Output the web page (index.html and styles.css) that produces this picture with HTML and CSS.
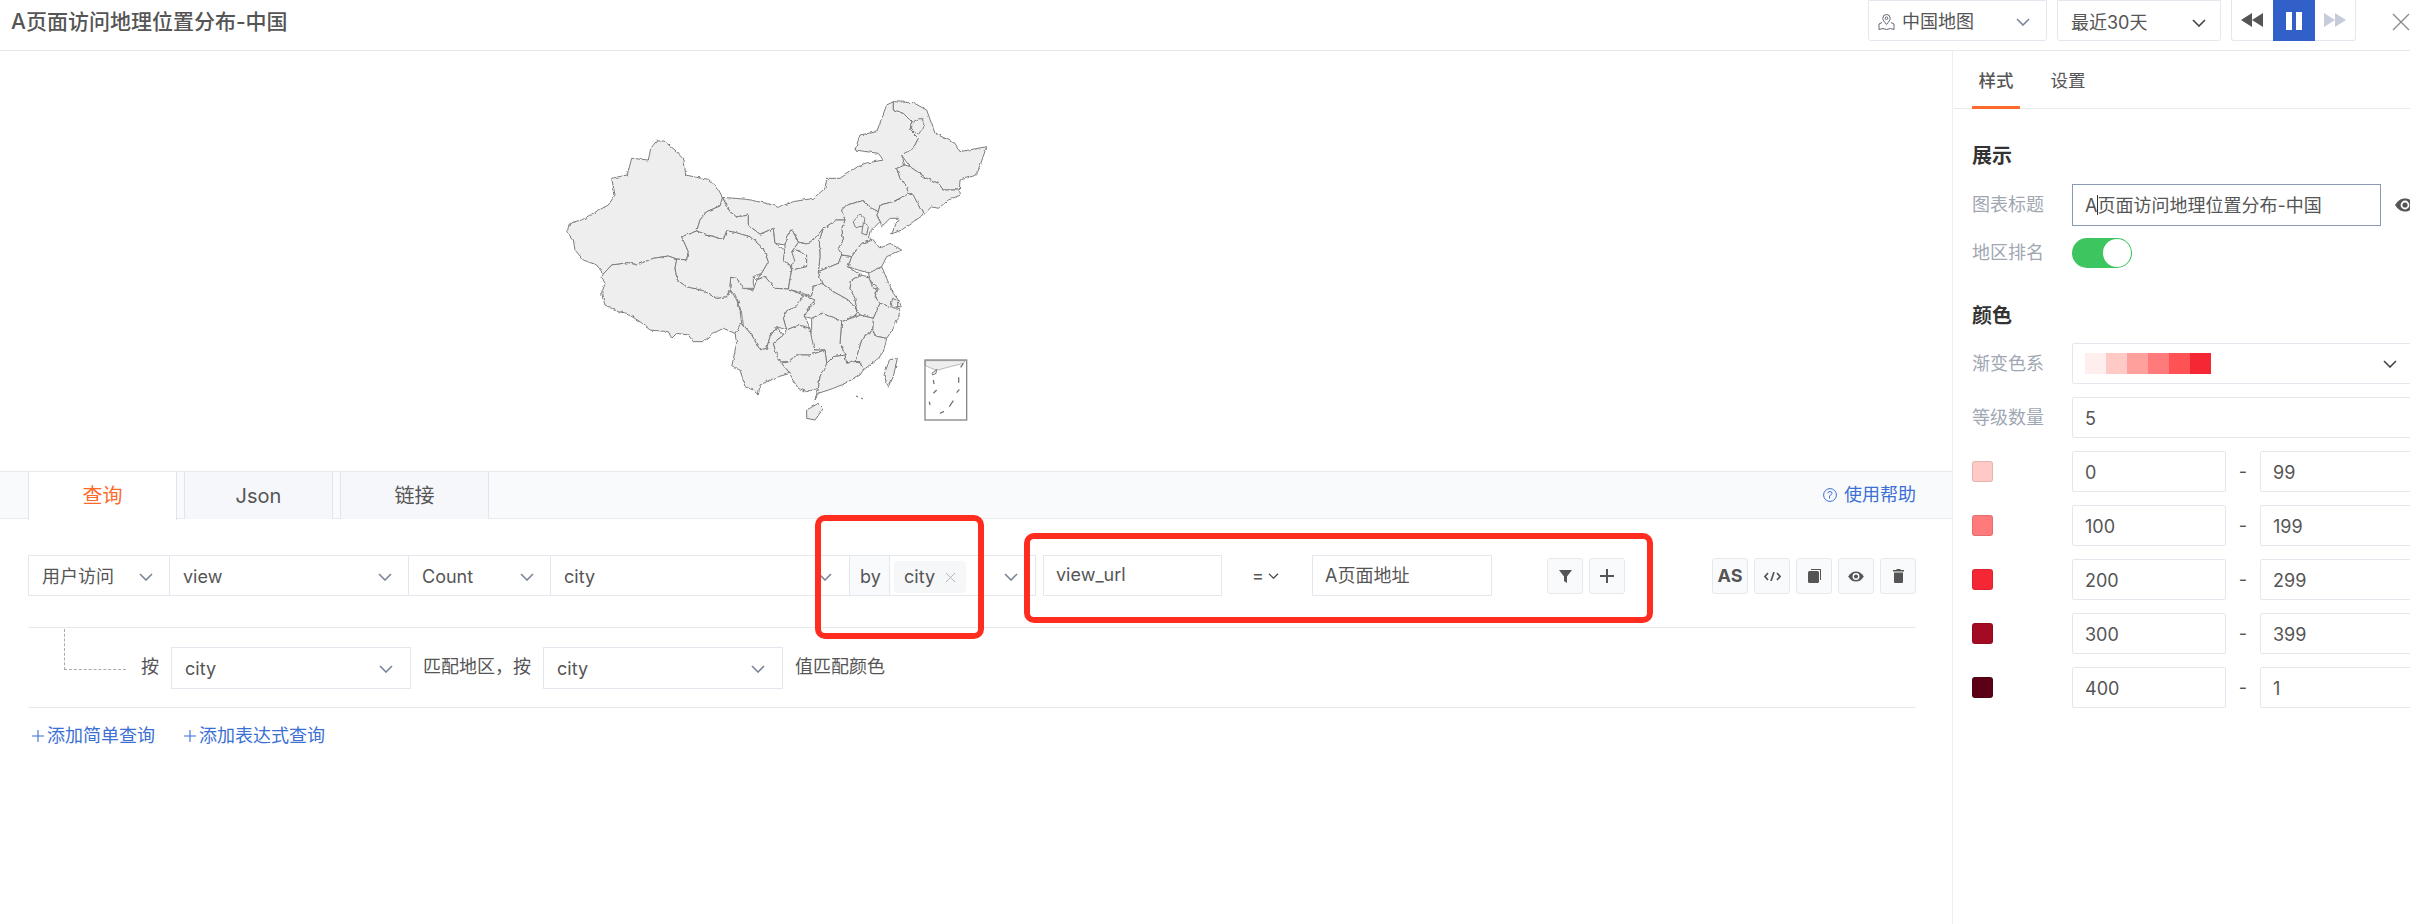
FILE: index.html
```html
<!DOCTYPE html>
<html>
<head>
	<meta charset="utf-8">
	<title>A页面访问地理位置分布-中国</title>
	<link rel="stylesheet" href="styles.css">
</head>
<body>
<svg class="defs" width="0" height="0">
	<symbol id="chev" viewBox="0 0 14 8"><path d="M1 1l6 6 6-6" fill="none" stroke="currentColor" stroke-width="1.6"/></symbol>
	<symbol id="eye" viewBox="0 0 20 14"><path d="M0 7C3 2.500 6 .5 10 .5S17 2.500 20 7c-3 4.500-6 6.500-10 6.500S3 11.500 0 7z" fill="#555"/><circle cx="10" cy="7" r="4.400" fill="#fff"/><circle cx="10" cy="7" r="2.600" fill="#555"/></symbol>
	<symbol id="plus" viewBox="0 0 12 12"><path d="M6 0v12M0 6h12" stroke="#3b6fd4" stroke-width="1.100"/></symbol>
	<filter id="rough" x="-5%" y="-5%" width="110%" height="110%" primitiveUnits="userSpaceOnUse">
		<feTurbulence type="fractalNoise" baseFrequency="0.07" numOctaves="2" seed="4" result="noise"/>
		<feDisplacementMap in="SourceGraphic" in2="noise" scale="9" xChannelSelector="R" yChannelSelector="G" result="moved"/>
		<feGaussianBlur in="moved" stdDeviation="0.8"/>
	</filter>
</svg>

<div class="header">
	<div class="title">A页面访问地理位置分布-中国</div>
	<div class="sel top-sel map-sel">
		<span class="sel-text">
			<svg class="pin" viewBox="0 0 17 16"><path d="M8.500 10.500C6.500 8 4.800 6.200 4.800 4.200a3.700 3.700 0 0 1 7.400 0c0 2-1.700 3.800-3.700 6.300z" fill="none" stroke="#667" stroke-width="1"/><circle cx="8.500" cy="4.200" r="1.300" fill="none" stroke="#667"/><path d="M4 8.500L1 10v5.500l4-1 3.500 1 4-1 3.500 1V10l-3-1.500" fill="none" stroke="#667"/></svg>
			中国地图
		</span>
		<svg class="chev"><use href="#chev"/></svg>
	</div>
	<div class="sel top-sel date-sel">
		<span>最近30天</span>
		<svg class="chev dark"><use href="#chev"/></svg>
	</div>
	<div class="player">
		<div class="play-btn"><svg width="22" height="14" viewBox="0 0 22 14"><path d="M11 0v14L0 7zM22 0v14L11 7z" fill="#555"/></svg></div>
		<div class="play-btn on"><svg width="16" height="18" viewBox="0 0 16 18"><path d="M0 0h6v18H0zM10 0h6v18h-6z" fill="#fff"/></svg></div>
		<div class="play-btn"><svg width="22" height="14" viewBox="0 0 22 14"><path d="M0 0v14l11-7zM11 0v14l11-7z" fill="#c6ccd9"/></svg></div>
	</div>
	<svg class="close" width="18" height="18" viewBox="0 0 18 18"><path d="M1 1l16 16M17 1L1 17" stroke="#888" stroke-width="1.300"/></svg>
</div>

<div class="main">
	<div class="left">
		<div class="map-area">
			<svg class="china" width="480" height="360" viewBox="0 0 1440 1080">
				<g filter="url(#rough)">
				<polygon points="548,352 530,320 505,298 470,292 437,285 432,240 405,210 372,183 350,183 332,205 325,240 275,235 262,285 215,295 225,345 205,375 150,405 125,420 90,430 80,455 100,480 105,510 130,540 170,555 190,582 215,555 265,548 290,555 340,535 385,528 410,537 440,540 445,515 425,470 470,453 480,420 500,395 540,378"/>
				<polygon points="190,582 215,555 265,548 290,555 340,535 385,528 410,537 405,565 412,600 440,620 490,632 530,655 560,650 572,630 590,660 600,690 605,730 595,745 585,760 550,745 520,760 490,785 460,785 445,765 410,760 395,775 385,755 330,750 300,725 260,700 235,695 195,675 185,640 195,610 185,590"/>
				<polygon points="470,453 505,465 550,478 560,452 590,458 630,470 670,505 685,545 665,580 640,590 640,625 610,625 590,595 572,592 570,625 560,650 530,655 490,632 440,620 412,600 405,565 410,537 440,540 445,515 425,470"/>
				<polygon points="548,352 570,395 590,410 625,405 625,435 660,462 700,445 705,490 735,510 730,540 750,558 755,570 800,560 800,525 770,510 755,515 755,570 745,627 705,625 675,590 645,598 665,580 685,545 670,505 630,470 590,458 560,452 550,478 505,465 470,453 480,420 500,395 540,378"/>
				<polygon points="548,352 620,358 680,370 715,382 760,365 820,355 855,325 860,295 900,295 945,265 975,250 1030,240 1015,220 945,210 960,165 1010,155 1040,75 1060,65 1060,90 1090,100 1115,125 1110,150 1135,175 1120,205 1085,225 1095,255 1070,265 1080,295 1100,320 1105,342 1060,365 1020,375 1015,395 995,385 970,362 920,375 905,390 915,420 890,420 850,445 820,480 800,492 775,485 755,447 740,470 735,495 705,490 700,445 660,462 625,435 625,405 590,410 570,395"/>
				<polygon points="1060,65 1120,68 1160,90 1185,160 1245,190 1260,215 1340,200 1310,285 1260,300 1258,330 1210,330 1195,310 1160,295 1110,260 1095,240 1085,225 1120,205 1135,175 1110,150 1115,125 1090,100 1060,90"/>
				<polygon points="1115,125 1145,115 1152,135 1135,165 1115,150"/>
				<polygon points="1095,255 1110,260 1160,295 1195,310 1210,330 1258,330 1262,345 1225,360 1195,385 1175,380 1150,405 1135,375 1115,340 1105,342 1100,320 1080,295 1070,265"/>
				<polygon points="1105,342 1120,345 1135,375 1150,405 1120,425 1085,450 1055,462 1075,415 1050,415 1025,440 1020,420 1010,405 1015,395 1020,375 1060,365"/>
				<polygon points="905,390 920,375 970,362 995,385 1015,395 1010,405 1020,425 990,455 985,475 1000,480 965,490 935,530 905,525 895,505 910,480 905,445 915,420"/>
				<polygon points="940,425 960,402 975,415 970,440 945,440"/>
				<polygon points="970,430 985,440 980,465 965,460"/>
				<polygon points="850,445 890,420 915,420 905,445 910,480 895,505 905,525 895,550 835,575 840,530 838,480"/>
				<polygon points="850,445 838,480 840,530 835,575 845,610 820,620 815,650 790,640 745,627 755,570 800,560 800,525 770,510 755,515 775,487 800,492 820,480"/>
				<polygon points="735,495 740,470 755,447 775,487 755,515 765,545 750,558 730,540 735,510"/>
				<polygon points="835,575 895,550 905,525 935,530 925,560 960,585 935,600 930,625 945,655 950,690 925,660 880,635 845,610"/>
				<polygon points="935,530 965,490 1000,480 1020,505 1050,490 1085,510 1040,530 1025,560 995,580 960,572 925,560"/>
				<polygon points="985,580 1025,560 1040,595 1060,640 1075,660 1085,680 1050,680 1020,670 1005,650 1015,625 995,610"/>
				<polygon points="935,600 960,585 985,590 1000,625 1012,625 1005,650 1020,670 1000,715 960,705 950,690 945,655 930,625"/>
				<polygon points="1020,670 1050,680 1080,690 1075,715 1060,745 1040,775 1005,768 998,745 1000,715"/>
				<polygon points="1058,655 1072,662 1074,682 1052,680"/>
				<polygon points="1005,768 1040,775 1030,815 1015,835 970,870 960,845 945,845 965,780 998,750"/>
				<polygon points="905,725 960,705 1000,715 998,745 965,780 945,845 920,850 915,825 900,790"/>
				<polygon points="790,645 815,650 820,620 845,610 880,635 925,660 950,690 950,705 905,725 880,712 845,700 815,715 795,710 800,690 825,670"/>
				<polygon points="815,715 845,700 880,712 905,725 900,790 915,825 880,830 860,850 855,810 825,810 810,775 815,745"/>
				<polygon points="790,645 825,660 800,690 795,710 810,745 775,735 740,750 730,715 740,692 770,680"/>
				<polygon points="572,592 590,595 610,625 640,630 650,600 675,590 705,625 745,627 790,645 770,680 740,692 730,715 740,750 710,740 690,770 680,805 660,810 635,765 610,735 605,700 590,650 570,625"/>
				<polygon points="600,730 610,735 635,765 660,810 680,805 690,770 710,740 730,765 700,790 715,840 725,850 750,880 715,890 690,900 660,915 655,945 640,930 615,920 600,870 575,860 590,790 585,760 595,745"/>
				<polygon points="740,750 775,735 810,745 815,775 825,810 855,810 810,825 770,825 745,845 725,845 715,840 700,790 730,765"/>
				<polygon points="725,850 745,845 770,825 810,825 855,810 860,850 870,840 840,890 835,925 800,935 775,925 755,895 750,880"/>
				<polygon points="860,850 880,830 915,825 920,850 945,845 960,845 970,870 960,885 915,910 880,925 835,940 825,960 835,925 840,890"/>
				<polygon points="800,990 835,970 850,985 825,1020 800,1015"/>
				<polygon points="1050,835 1072,835 1060,890 1045,922 1032,885"/>
				</g>
				<path class="inset-land" d="M1155 842h120l-5 8c-30 8-50 12-75 20-15 0-30-10-40-14z"/>
				<rect class="inset" x="1155" y="840" width="125" height="180"/>
				<path class="dash" d="M1270 850l-8 12M1256 892v16M1258 928l-8 10M1240 962l-12 18M1212 994l-12 6M1168 965l2 10M1180 900l2 12M1190 930l-10 10M948 948l6 3M964 954l4 3"/>
				<polygon points="1176,880 1190,868 1188,880 1178,885"/>
			</svg>
		</div>

		<div class="tabs">
			<div class="tab on">查询</div>
			<div class="tab">Json</div>
			<div class="tab">链接</div>
			<a class="help">
				<svg width="14" height="14" viewBox="0 0 14 14"><circle cx="7" cy="7" r="6.400" fill="none" stroke="#3b6fd4"/><path d="M4.800 5.200A2.200 2.200 0 0 1 7 3.500a2 2 0 0 1 2 2c0 1.500-2.300 1.400-2.500 2.500v2.500" fill="none" stroke="#3b6fd4"/></svg>
				使用帮助
			</a>
		</div>

		<div class="query">
			<div class="q-row">
				<div class="sel-group">
					<div class="sel cell w-source"><span>用户访问</span><svg class="chev"><use href="#chev"/></svg></div>
					<div class="sel cell w-event"><span>view</span><svg class="chev"><use href="#chev"/></svg></div>
					<div class="sel cell w-count"><span>Count</span><svg class="chev"><use href="#chev"/></svg></div>
					<div class="sel cell w-field"><span>city</span><svg class="chev"><use href="#chev"/></svg></div>
					<div class="by-cell">by</div>
					<div class="sel cell w-tags">
						<span class="tag">city <svg width="11" height="11" viewBox="0 0 11 11"><path d="M1 1l9 9M10 1l-9 9" stroke="#b5b5b5" stroke-width="1"/></svg></span>
						<svg class="chev"><use href="#chev"/></svg>
					</div>
				</div>
				<div class="text-input w-key">view_url</div>
				<div class="op">=<svg class="chev dark small"><use href="#chev"/></svg></div>
				<div class="text-input w-val">A页面地址</div>
				<div class="btn first">
					<svg width="13" height="13" viewBox="0 0 13 13"><path d="M0 0h13L8 6.500V13L5 11V6.500z" fill="#555"/></svg>
				</div>
				<div class="btn">
					<svg width="14" height="14" viewBox="0 0 14 14"><path d="M7 0v14M0 7h14" stroke="#555" stroke-width="2"/></svg>
				</div>
				<div class="btn push as">AS</div>
				<div class="btn">
					<svg width="17" height="9" viewBox="0 0 17 9"><path d="M4 1L1 4.500 4 8M13 1l3 3.500L13 8M10 0L7 9" fill="none" stroke="#555" stroke-width="1.700"/></svg>
				</div>
				<div class="btn">
					<svg width="13" height="14" viewBox="0 0 13 14"><path d="M3 0h10v11h-1V1H3z" fill="#555"/><rect y="2" width="11" height="12" rx="1.500" fill="#555"/></svg>
				</div>
				<div class="btn"><svg width="16" height="11"><use href="#eye"/></svg></div>
				<div class="btn">
					<svg width="11" height="14" viewBox="0 0 11 14"><path d="M3.500 0h4v1H11v1.500H0V1h3.500zM1 3.500h9V13a1 1 0 0 1-1 1H2a1 1 0 0 1-1-1z" fill="#555"/></svg>
				</div>
			</div>

			<div class="match-row">
				<div class="connector"></div>
				<span class="m-label">按</span>
				<div class="sel boxed"><span>city</span><svg class="chev"><use href="#chev"/></svg></div>
				<span class="m-text">匹配地区，按</span>
				<div class="sel boxed"><span>city</span><svg class="chev"><use href="#chev"/></svg></div>
				<span class="m-text">值匹配颜色</span>
			</div>

			<div class="add-row">
				<a class="add"><svg class="plus"><use href="#plus"/></svg>添加简单查询</a>
				<a class="add"><svg class="plus"><use href="#plus"/></svg>添加表达式查询</a>
			</div>
		</div>

		<div class="mark mark-by"></div>
		<div class="mark mark-filter"></div>
	</div>

	<div class="side">
		<div class="side-tabs">
			<div class="side-tab on">样式</div>
			<div class="side-tab">设置</div>
		</div>
		<div class="side-body">
			<div class="sec-title first">展示</div>
			<div class="f-row tall">
				<label>图表标题</label>
				<div class="field focus">A<i class="caret"></i>页面访问地理位置分布-中国</div>
				<svg class="title-eye" width="20" height="14"><use href="#eye"/></svg>
			</div>
			<div class="f-row switch-row">
				<label>地区排名</label>
				<div class="switch"><i></i></div>
			</div>

			<div class="sec-title">颜色</div>
			<div class="f-row">
				<label>渐变色系</label>
				<div class="field wide spread">
					<div class="ramp">
						<i class="c1"></i><i class="c2"></i><i class="c3"></i><i class="c4"></i><i class="c5"></i><i class="c6"></i>
					</div>
					<svg class="chev dark"><use href="#chev"/></svg>
				</div>
			</div>
			<div class="f-row">
				<label>等级数量</label>
				<div class="field wide">5</div>
			</div>
			<div class="f-row">
				<label><i class="swatch s1"></i></label>
				<div class="field low">0</div><span class="dash-sign">-</span><div class="field high">99</div>
			</div>
			<div class="f-row">
				<label><i class="swatch s2"></i></label>
				<div class="field low">100</div><span class="dash-sign">-</span><div class="field high">199</div>
			</div>
			<div class="f-row">
				<label><i class="swatch s3"></i></label>
				<div class="field low">200</div><span class="dash-sign">-</span><div class="field high">299</div>
			</div>
			<div class="f-row">
				<label><i class="swatch s4"></i></label>
				<div class="field low">300</div><span class="dash-sign">-</span><div class="field high">399</div>
			</div>
			<div class="f-row">
				<label><i class="swatch s5"></i></label>
				<div class="field low">400</div><span class="dash-sign">-</span><div class="field high">1</div>
			</div>
		</div>
	</div>
</div>
</body>
</html>
```

FILE: styles.css
```css
*{margin: 0; padding: 0; box-sizing: border-box;}
body{
	width: 2410px; height: 924px;
	overflow: hidden;
	background: #fff;
	color: #555;
	font-family: Inter, "Noto Sans CJK SC", sans-serif;
	font-size: 18px;
	line-height: 24px;
}
.defs{position: absolute;}
i{display: block;}

/* header */
.header{
	display: flex;
	height: 51px;
	padding-left: 11px;
	border-bottom: 1px solid #e8e8e8;
}
.title{
	flex: 1;
	padding-top: 8px;
	font-size: 21px;
	font-weight: 500;
	line-height: 28px;
	color: #555;
}
.top-sel{
	height: 41px;
	margin-right: 10px;
	border: 1px solid #e4e7ed;
	border-radius: 0 0 3px 3px;
}
.top-sel > *{margin-top: 2px;}
.map-sel{width: 179px; padding: 0 16px 0 9px;}
.date-sel{width: 164px; padding: 3px 14px 0 13px;}
.sel-text{display: flex; align-items: center; gap: 7px;}
.pin{width: 17px; height: 16px;}
.player{
	display: flex;
	width: 125px; height: 41px;
	border: 1px solid #e4e7ed;
	border-top: 0;
	border-radius: 0 0 3px 3px;
}
.play-btn{flex: 1; display: flex; align-items: center; justify-content: center;}
.play-btn.on{flex: none; width: 42px; height: 41px; background: #3060c8;}
.close{margin: 13px 0 0 36px; flex-shrink: 0;}

/* select */
.sel{display: flex; align-items: center; justify-content: space-between;}
.chev{width: 14px; height: 8px; color: #7a8499; flex-shrink: 0;}
.chev.dark{color: #444;}
.chev.small{width: 11px; height: 6px; margin-left: 4px;}

.main{display: flex; height: 873px;}

/* left */
.left{position: relative; width: 1952px;}
.map-area{height: 420px; padding: 29px 0 0 540px;}
.china polygon{fill: #eee; stroke: #7c7c7c; stroke-width: 3; stroke-linejoin: round;}
.china .inset{fill: none; stroke: #888; stroke-width: 4;}
.china .inset-land{fill: #eee; stroke: #999; stroke-width: 2;}
.china .dash{fill: none; stroke: #777; stroke-width: 4;}

.tabs{
	display: flex;
	gap: 7px;
	height: 48px;
	padding-left: 28px;
	background: #f9fafc;
	border-top: 1px solid #e8eaf0;
	border-bottom: 1px solid #e8eaf0;
}
.tab{
	width: 149px; height: 47px;
	line-height: 48px;
	font-size: 20px;
	text-align: center;
	background: #f6f7fb;
	border-left: 1px solid #e2e5ee;
	border-right: 1px solid #e2e5ee;
}
.tab.on{background: #fff; color: #fd6a2a; height: 48px;}
.help{
	display: flex;
	align-items: center;
	gap: 7px;
	margin-left: auto;
	margin-right: 36px;
	color: #3b6fd4;
}

.query{padding: 36px 36px 0 28px;}
.q-row{
	display: flex;
	height: 73px;
	border-bottom: 1px solid #e8e8e8;
}
.sel-group{
	display: flex;
	height: 41px;
	border: 1px solid #e4e7ed;
	width: 1008px;
}
.cell{padding: 0 16px 0 13px; border-right: 1px solid #e4e7ed;}
.cell > *{margin-top: 3px;}
.w-source{width: 141px;}
.w-event{width: 239px;}
.w-count{width: 142px;}
.w-field{width: 299px; padding-right: 17px;}
.by-cell{
	width: 40px;
	padding-left: 10px;
	line-height: 41px;
	background: #f9fafc;
	border-right: 1px solid #e4e7ed;
}
.w-tags{flex: 1; padding: 0 17px 0 4px; border-right: 0;}
.tag{
	display: flex;
	align-items: center;
	gap: 10px;
	width: 72px; height: 32px;
	padding-left: 10px;
	background: #f6f7f9;
	border-radius: 4px;
}
.text-input{
	height: 41px;
	padding-left: 12px;
	line-height: 37px;
	border: 1px solid #e4e7ed;
}
.w-key{width: 179px; margin-left: 7px;}
.w-val{width: 180px; line-height: 39px;}
.op{
	display: flex;
	align-items: center;
	width: 90px; height: 41px;
	padding-left: 30px;
}
.btn{
	display: flex;
	align-items: center;
	justify-content: center;
	width: 36px; height: 36px;
	margin: 3px 0 0 6px;
	background: #f9fafb;
	border: 1px solid #e6e8ec;
	border-radius: 3px;
}
.btn.first{margin-left: 55px;}
.btn.push{margin-left: auto;}
.as{font-size: 18px; font-weight: 700;}

.match-row{
	display: flex;
	align-items: flex-start;
	height: 80px;
	padding-top: 19px;
	border-bottom: 1px solid #e8e8e8;
}
.connector{
	width: 62px; height: 41px;
	margin: -18px 15px 0 36px;
	border-left: 1px dashed #aaa;
	border-bottom: 1px dashed #aaa;
}
.m-label{width: 30px; line-height: 40px;}
.m-text{margin: 0 12px; line-height: 40px;}
.boxed{
	width: 240px; height: 42px;
	padding: 0 17px 0 13px;
	border: 1px solid #e4e7ed;
}
.boxed > *{margin-top: 2px;}
.add-row{display: flex; gap: 29px; padding: 16px 0 0 4px;}
.add{display: flex; align-items: center; color: #3b6fd4;}
.plus{width: 12px; height: 12px; margin-right: 3px;}

/* red marks on top of the query row */
.mark{
	position: absolute;
	border: 6px solid #ff2d20;
	border-radius: 10px;
}
.mark-by{left: 815px; top: 464px; width: 169px; height: 124px;}
.mark-filter{left: 1024px; top: 482px; width: 629px; height: 90px;}

/* right panel */
.side{
	width: 458px;
	overflow: hidden;
	border-left: 1px solid #eee;
}
.side-tabs{
	display: flex;
	height: 58px;
	margin-left: 1px;
	padding-left: 18px;
	border-bottom: 1px solid #eaeaea;
}
.side-tab{
	height: 58px;
	width: 48px;
	margin-right: 24px;
	padding-top: 18px;
	text-align: center;
	font-size: 17.500px;
}
.side-tab.on{border-bottom: 3px solid #fd6a2a; font-weight: 500;}
.side-body{padding: 32px 0 0 19px;}
.sec-title{
	height: 28px;
	margin: 33px 0 14px;
	font-size: 20px;
	font-weight: 700;
	line-height: 30px;
	color: #333;
}
.sec-title.first{margin-top: 0; margin-bottom: 15px;}
.f-row{
	display: flex;
	align-items: center;
	width: 460px;
	height: 41px;
	margin-bottom: 13px;
	flex-shrink: 0;
}
.f-row.tall{height: 42px; margin-bottom: 12px;}
.f-row.switch-row{height: 30px; margin-bottom: 0;}
.f-row label{width: 100px; flex-shrink: 0; color: #a0a7b3;}
.field{
	flex-shrink: 0;
	height: 41px;
	padding-left: 12px;
	line-height: 41px;
	border: 1px solid #e4e7ed;
	border-radius: 2px;
}
.field.focus{width: 309px; height: 42px; border-color: #8a9ab5; border-radius: 0; display: flex; align-items: center;}
.field.wide{width: 354px;}
.field.low{width: 154px;}
.field.high{width: 154px;}
.spread{display: flex; align-items: center; justify-content: space-between; padding-right: 28px;}
.caret{width: 1px; height: 20px; background: #333; margin-right: -1px;}
.title-eye{flex-shrink: 0; margin-left: 14px;}
.dash-sign{width: 34px; flex-shrink: 0; text-align: center;}

.switch{
	display: flex;
	justify-content: flex-end;
	align-items: center;
	width: 60px; height: 30px;
	padding-right: 1px;
	background: #3dc55f;
	border-radius: 15px;
}
.switch i{width: 28px; height: 28px; background: #fff; border-radius: 50%;}

.ramp{display: flex;}
.ramp i{width: 21px; height: 21px;}
.c1{background: #ffeeee;}
.c2{background: #ffc9c5;}
.c3{background: #ffa09c;}
.c4{background: #ff7a7a;}
.c5{background: #ff5254;}
.c6{background: #f52735;}

.swatch{
	width: 21px; height: 21px;
	border-radius: 3px;
	border: 1px solid rgba(0,0,0,.1);
}
.s1{background: #ffc9c5;}
.s2{background: #ff7a7a;}
.s3{background: #f52735;}
.s4{background: #a30b22;}
.s5{background: #5c0016;}
```
